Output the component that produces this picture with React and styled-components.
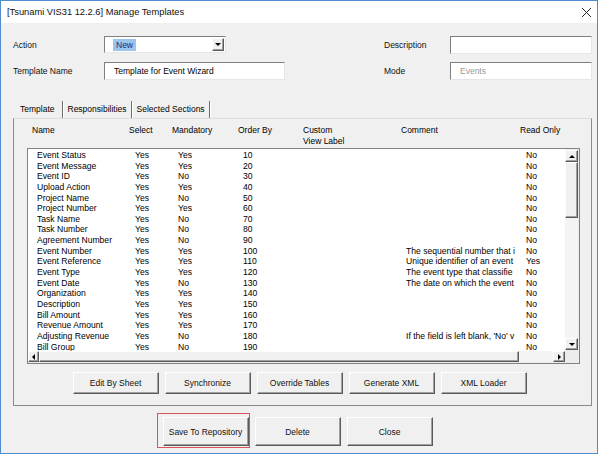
import React from 'react'
import styled, { createGlobalStyle, css } from 'styled-components';

const rows = [
  ['Event Status', 'Yes', 'Yes', '10', '', 'No'],
  ['Event Message', 'Yes', 'Yes', '20', '', 'No'],
  ['Event ID', 'Yes', 'No', '30', '', 'No'],
  ['Upload Action', 'Yes', 'Yes', '40', '', 'No'],
  ['Project Name', 'Yes', 'No', '50', '', 'No'],
  ['Project Number', 'Yes', 'Yes', '60', '', 'No'],
  ['Task Name', 'Yes', 'No', '70', '', 'No'],
  ['Task Number', 'Yes', 'No', '80', '', 'No'],
  ['Agreement Number', 'Yes', 'No', '90', '', 'No'],
  ['Event Number', 'Yes', 'Yes', '100', 'The sequential number that i', 'No'],
  ['Event Reference', 'Yes', 'Yes', '110', 'Unique identifier of an event', 'Yes'],
  ['Event Type', 'Yes', 'Yes', '120', 'The event type that classifie', 'No'],
  ['Event Date', 'Yes', 'No', '130', 'The date on which the event', 'No'],
  ['Organization', 'Yes', 'Yes', '140', '', 'No'],
  ['Description', 'Yes', 'Yes', '150', '', 'No'],
  ['Bill Amount', 'Yes', 'Yes', '160', '', 'No'],
  ['Revenue Amount', 'Yes', 'Yes', '170', '', 'No'],
  ['Adjusting Revenue', 'Yes', 'No', '180', "If the field is left blank, 'No' v", 'No'],
  ['Bill Group', 'Yes', 'No', '190', '', 'No'],
];

const App = () => {
  return (
    <>
      <GlobalStyle />
      <Ventana>
        <BarraTitulo>
          <span>[Tsunami VIS31 12.2.6] Manage Templates</span>
          <svg width="11" height="11" viewBox="0 0 11 11">
            <path d="M1 1 L10 10 M10 1 L1 10" stroke="#222" strokeWidth="1" />
          </svg>
        </BarraTitulo>
        <Cuerpo>
          <Formulario>
            <GrupoCampos $label={91}>
              <Etiqueta>Action</Etiqueta>
              <Combo>
                <Seleccion>New</Seleccion>
                <BotonCombo><Flecha $dir="down" /></BotonCombo>
              </Combo>
              <Etiqueta>Template Name</Etiqueta>
              <Caja $w={181}>Template for Event Wizard</Caja>
            </GrupoCampos>
            <GrupoCampos $label={66}>
              <Etiqueta>Description</Etiqueta>
              <Caja $w={142} />
              <Etiqueta>Mode</Etiqueta>
              <Caja $w={142} $gris>Events</Caja>
            </GrupoCampos>
          </Formulario>

          <Pestanas>
            <Pestana $activa>Template</Pestana>
            <Pestana>Responsibilities</Pestana>
            <Pestana>Selected Sections</Pestana>
          </Pestanas>

          <Panel>
            <Encabezado>
              <span>Name</span>
              <span>Select</span>
              <span>Mandatory</span>
              <span>Order By</span>
              <span>Custom<br />View Label</span>
              <span>Comment</span>
              <span>Read Only</span>
            </Encabezado>
            <Lista>
              <Contenido>
                {rows.map((r, i) => (
                  <Fila key={i}>
                    <span>{r[0]}</span>
                    <span>{r[1]}</span>
                    <span>{r[2]}</span>
                    <span>{r[3]}</span>
                    <span></span>
                    <Comentario>{r[4]}</Comentario>
                    <span>{r[5]}</span>
                  </Fila>
                ))}
              </Contenido>
              <ScrollVertical>
                <BotonScroll $h={12}><Flecha $dir="up" /></BotonScroll>
                <Pulgar $alto={56} />
                <Pista />
                <BotonScroll $h={12}><Flecha $dir="down" /></BotonScroll>
              </ScrollVertical>
              <ScrollHorizontal>
                <BotonScroll $w={11}><Flecha $dir="left" /></BotonScroll>
                <Pulgar $ancho={480} />
                <Pista />
                <BotonScroll $w={12}><Flecha $dir="right" /></BotonScroll>
              </ScrollHorizontal>
              <Esquina />
            </Lista>
            <FilaBotones $gap={6} $der={8}>
              <Boton $h={22}>Edit By Sheet</Boton>
              <Boton $h={22}>Synchronize</Boton>
              <Boton $h={22}>Override Tables</Boton>
              <Boton $h={22}>Generate XML</Boton>
              <Boton $h={22}>XML Loader</Boton>
            </FilaBotones>
          </Panel>

          <FilaBotones $gap={6} $der={10} $arriba={11}>
            <BotonMarcado $h={29}>Save To Repository</BotonMarcado>
            <Boton $h={29}>Delete</Boton>
            <Boton $h={29}>Close</Boton>
          </FilaBotones>
        </Cuerpo>
      </Ventana>
    </>
  )
}

export default App;

const GlobalStyle = createGlobalStyle`
html, body {
  margin: 0;
  padding: 0;
  background: #f0f0f0;
}
body {
  font-family: "Liberation Sans", Arial, sans-serif;
}
`;

const Ventana = styled.div`
width: 598px;
height: 454px;
box-sizing: border-box;
border: 1px solid #4f8ccb;
background: #f0f0f0;
display: flex;
flex-direction: column;
font-size: 8.5px;
color: #000;
overflow: hidden;
`;

const BarraTitulo = styled.div`
height: 22px;
flex-shrink: 0;
background: #fff;
display: flex;
align-items: center;
justify-content: space-between;
padding: 0 5px 0 6px;
font-size: 9.3px;
color: #111;
`;

const Cuerpo = styled.div`
padding: 13px 5px 0 12px;
display: flex;
flex-direction: column;
`;

const Formulario = styled.div`
display: flex;
justify-content: space-between;
`;

const GrupoCampos = styled.div`
display: grid;
grid-template-columns: ${p => p.$label}px auto;
row-gap: 8px;
align-items: center;
`;

const Etiqueta = styled.span`
font-size: 8.5px;
color: #111;
`;

const campoBorde = css`
box-sizing: border-box;
background: #fff;
border: 1px solid;
border-color: #7f7f7f #e6e6e6 #e6e6e6 #7f7f7f;
`;

const Caja = styled.div`
${campoBorde}
width: ${p => p.$w}px;
height: 18px;
padding-left: 9px;
display: flex;
align-items: center;
color: ${p => p.$gris ? '#9a9a9a' : '#000'};
`;

const Combo = styled.div`
${campoBorde}
width: 122px;
height: 17px;
display: flex;
align-items: center;
justify-content: space-between;
padding: 0 1px 0 8px;
`;

const Seleccion = styled.span`
background: #9ac6ee;
color: #14307a;
padding: 1px 3px;
`;

const boton3d = css`
box-sizing: border-box;
background: #f0f0f0;
border: 1px solid;
border-color: #fff #5a5a5a #5a5a5a #fff;
box-shadow: inset -1px -1px 0 #a0a0a0;
`;

const BotonCombo = styled.div`
${boton3d}
width: 12px;
height: 13px;
display: flex;
align-items: center;
justify-content: center;
`;

const Flecha = styled.span`
width: 0;
height: 0;
display: block;
${p => p.$dir === 'down' && css`
  border-left: 3px solid transparent;
  border-right: 3px solid transparent;
  border-top: 3px solid #000;
`}
${p => p.$dir === 'up' && css`
  border-left: 3px solid transparent;
  border-right: 3px solid transparent;
  border-bottom: 3px solid #000;
`}
${p => p.$dir === 'left' && css`
  border-top: 3px solid transparent;
  border-bottom: 3px solid transparent;
  border-right: 3px solid #000;
`}
${p => p.$dir === 'right' && css`
  border-top: 3px solid transparent;
  border-bottom: 3px solid transparent;
  border-left: 3px solid #000;
`}
`;

const Pestanas = styled.div`
margin-top: 21px;
display: flex;
height: 17px;
padding-left: 1px;
`;

const Pestana = styled.div`
padding: ${p => p.$activa ? '0 7px 0 6px' : '0 4px 0 3px'};
margin-left: ${p => p.$activa ? '0' : '2px'};
line-height: 17px;
border-right: 1px solid #6f6f6f;
box-shadow: 1px 0 0 #fff;
white-space: nowrap;
`;

const Panel = styled.div`
width: 579px;
box-sizing: border-box;
border: 1px solid #8a8a8a;
border-top-color: #dcdcdc;
padding: 6px 11px 11px 13px;
display: flex;
flex-direction: column;
`;

const columnas = css`
display: grid;
grid-template-columns: 98px 43px 65px 65px 98px 120px 1fr;
`;

const Encabezado = styled.div`
${columnas}
grid-template-columns: 97px 43px 66px 65px 98px 119px 1fr;
padding-left: 5px;
line-height: 10.6px;
height: 21px;
margin-bottom: 2px;
align-items: start;
`;

const Lista = styled.div`
height: 216px;
box-sizing: border-box;
border: 1px solid #828282;
background: #fff;
display: grid;
grid-template-columns: 1fr 14px;
grid-template-rows: 1fr 12px;
`;

const Contenido = styled.div`
padding: 1px 0 0 9px;
overflow: hidden;
`;

const Fila = styled.div`
${columnas}
height: 10.65px;
line-height: 10.65px;
font-size: 8.6px;
white-space: nowrap;
`;

const Comentario = styled.span`
width: 114px;
overflow: hidden;
`;

const ScrollVertical = styled.div`
display: flex;
flex-direction: column;
padding: 1px 1px 1px 0;
background: #ececec;
`;

const ScrollHorizontal = styled.div`
display: flex;
background: #ececec;
padding: 0 0 1px 0;
`;

const BotonScroll = styled.div`
${boton3d}
flex-shrink: 0;
width: ${p => p.$w ? p.$w + 'px' : 'auto'};
height: ${p => p.$h ? p.$h + 'px' : 'auto'};
display: flex;
align-items: center;
justify-content: center;
`;

const Pulgar = styled.div`
${boton3d}
flex-shrink: 0;
height: ${p => p.$alto ? p.$alto + 'px' : 'auto'};
width: ${p => p.$ancho ? p.$ancho + 'px' : 'auto'};
`;

const Pista = styled.div`
flex: 1;
background: #f4f4f4;
`;

const Esquina = styled.div`
background: #ececec;
`;

const FilaBotones = styled.div`
display: flex;
justify-content: center;
gap: ${p => p.$gap}px;
margin-top: ${p => p.$arriba || 8}px;
padding-right: ${p => p.$der}px;
`;

const Boton = styled.div`
${boton3d}
width: 86px;
height: ${p => p.$h}px;
display: flex;
align-items: center;
justify-content: center;
font-size: 8.5px;
color: #111;
`;

const BotonMarcado = styled(Boton)`
position: relative;
&::before {
  content: '';
  position: absolute;
  top: -5px;
  left: -7px;
  right: -2px;
  bottom: -3px;
  border: 1px solid #d9535e;
}
`;
